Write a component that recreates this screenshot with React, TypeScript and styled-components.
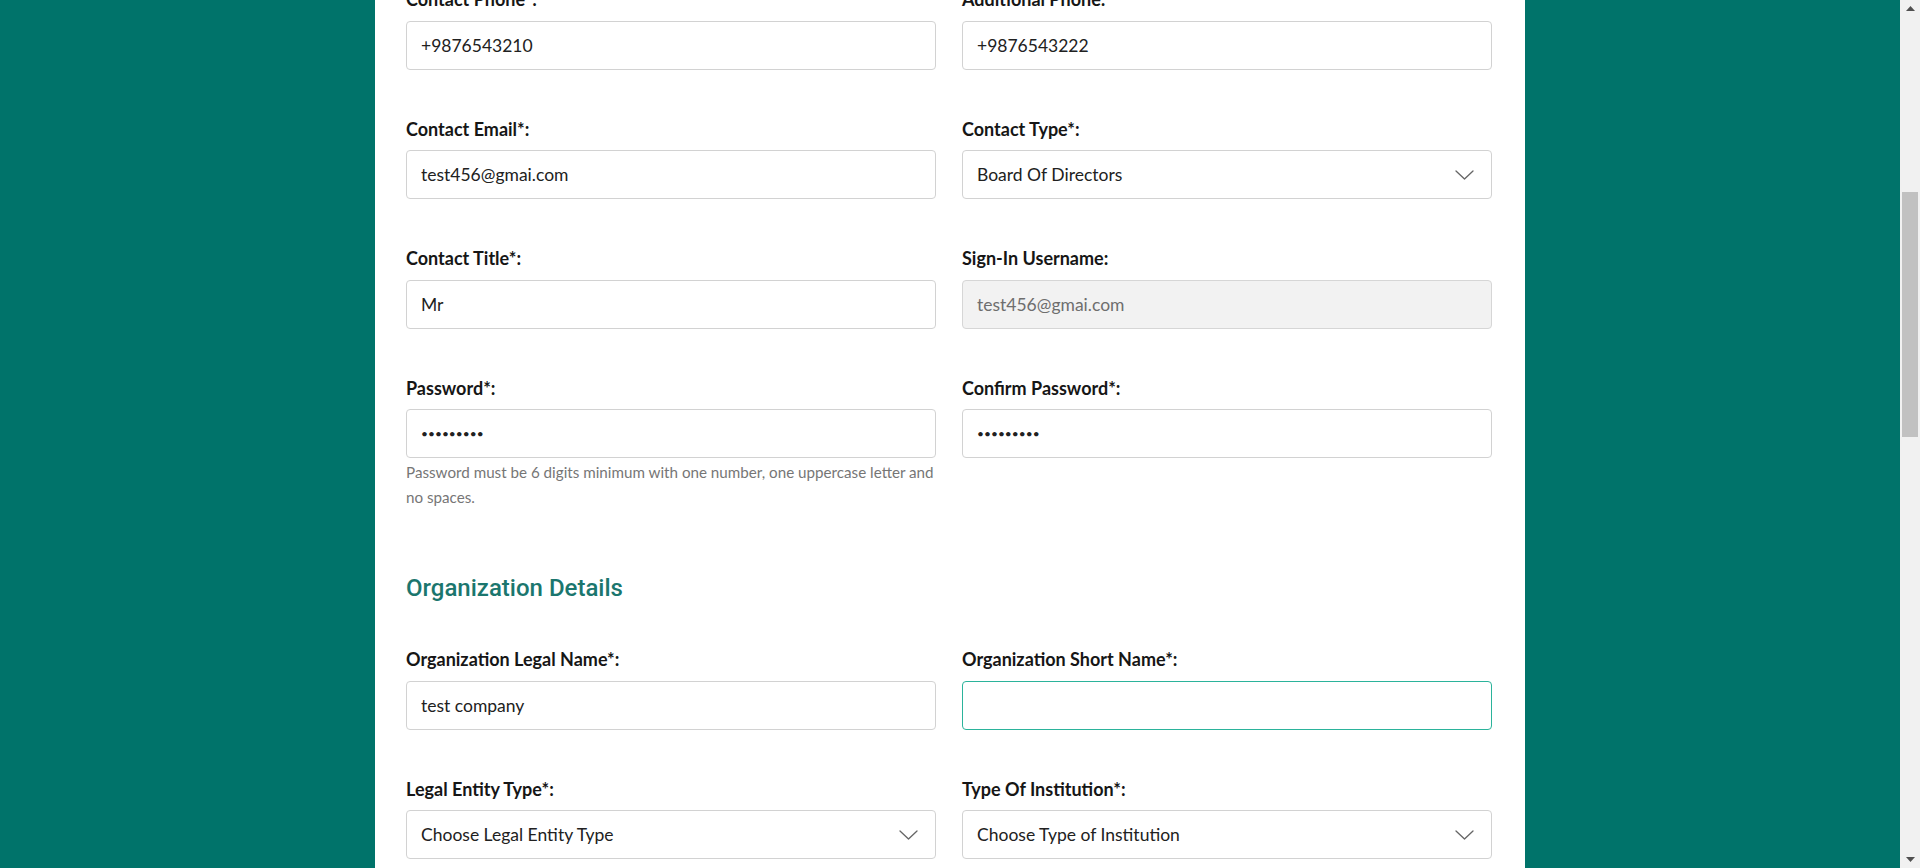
import React, { useLayoutEffect, useRef } from "react";
import styled, { createGlobalStyle } from "styled-components";

const TEAL = "#00736a";

const GlobalStyle = createGlobalStyle`
  html, body {
    margin: 0;
    padding: 0;
    height: 100%;
    overflow: hidden;
    background: ${TEAL};
  }
  body {
    font-family: Lato, "Open Sans", "Liberation Sans", sans-serif;
    color: #1d1d1d;
  }
  #root { height: 100%; }
  * { box-sizing: border-box; }
`;

const Screen = styled.div`
  display: flex;
  width: 100vw;
  height: 100vh;
`;

const Viewport = styled.div`
  flex: 1;
  min-width: 0;
  overflow: hidden;
  background: ${TEAL};
`;

const Card = styled.main`
  width: 1150px;
  margin: 0 auto;
  background: #ffffff;
  padding: 40px 33px 120px 31px;
`;

const PageTitle = styled.h1`
  margin: 0 0 30px;
  font-family: Roboto, "Noto Sans", sans-serif;
  font-weight: 500;
  font-size: 32px;
  line-height: 40px;
  color: ${TEAL};
`;

const SectionTitle = styled.h2`
  margin: 15.5px 0 44.5px;
  font-family: Roboto, "Noto Sans", sans-serif;
  font-weight: 500;
  font-size: 24px;
  line-height: 30px;
  color: #1b766e;
`;

const FormGrid = styled.div`
  display: grid;
  grid-template-columns: 1fr 1fr;
  column-gap: 26px;
  align-items: start;
`;

const FieldGroup = styled.div`
  display: flex;
  flex-direction: column;
  margin-bottom: 47px;
`;

const Label = styled.label`
  display: block;
  font-size: 18px;
  font-weight: 700;
  line-height: 24px;
  margin-bottom: 9.5px;
  color: #161616;
`;

const TextInput = styled.input<{ $focused?: boolean }>`
  width: 100%;
  height: 49px;
  padding: 0 14px;
  border: 1px solid ${(p) => (p.$focused ? "#2bb39b" : "#d2d2d2")};
  border-radius: 4px;
  background: #ffffff;
  font-family: Lato, "Open Sans", sans-serif;
  font-size: 17.5px;
  color: #212121;
  outline: none;

  &[type="password"] {
    font-size: 12px;
  }

  &:disabled {
    background: #f2f2f2;
    color: #6e6e6e;
    border-color: #d6d6d6;
  }
`;

const SelectWrap = styled.div`
  position: relative;
  width: 100%;
`;

const SelectBox = styled.select`
  width: 100%;
  height: 49px;
  padding: 0 48px 0 14px;
  border: 1px solid #d2d2d2;
  border-radius: 4px;
  background: #ffffff;
  font-family: Lato, "Open Sans", sans-serif;
  font-size: 17.5px;
  color: #212121;
  appearance: none;
  -webkit-appearance: none;
  outline: none;
`;

const Chevron = styled.svg`
  position: absolute;
  right: 18px;
  top: 50%;
  width: 19px;
  height: 10px;
  margin-top: -5px;
  pointer-events: none;
`;

const Hint = styled.p`
  margin: 2px 0 0;
  font-size: 15.2px;
  line-height: 25px;
  color: #767676;
`;

const SubmitButton = styled.button`
  height: 50px;
  padding: 0 40px;
  border: none;
  border-radius: 4px;
  background: ${TEAL};
  color: #ffffff;
  font-family: Lato, sans-serif;
  font-size: 18px;
  font-weight: 700;
`;

const ScrollTrack = styled.div`
  width: 20px;
  height: 100%;
  background: #f1f1f1;
  display: flex;
  flex-direction: column;
  align-items: center;
`;

const ArrowButton = styled.div`
  width: 100%;
  height: 17px;
  display: flex;
  align-items: center;
  justify-content: center;
  flex-shrink: 0;
`;

const Thumb = styled.div`
  width: 16px;
  background: #c1c1c1;
`;

const TrackFill = styled.div`
  flex: 1;
`;

const ChevronIcon = () => (
  <Chevron viewBox="0 0 19 10">
    <polyline
      points="1,1 9.5,9 18,1"
      fill="none"
      stroke="#666666"
      strokeWidth="1.3"
      strokeLinecap="round"
      strokeLinejoin="round"
    />
  </Chevron>
);

type FieldProps = {
  label: string;
  value?: string;
  type?: string;
  disabled?: boolean;
  focused?: boolean;
  hint?: string;
  inputRef?: React.Ref<HTMLInputElement>;
};

const Field = ({ label, value = "", type = "text", disabled, focused, hint, inputRef }: FieldProps) => (
  <FieldGroup>
    <Label>{label}</Label>
    <TextInput
      ref={inputRef}
      type={type}
      defaultValue={value}
      disabled={disabled}
      $focused={focused}
    />
    {hint && <Hint>{hint}</Hint>}
  </FieldGroup>
);

const SelectField = ({ label, value }: { label: string; value: string }) => (
  <FieldGroup>
    <Label>{label}</Label>
    <SelectWrap>
      <SelectBox defaultValue={value}>
        <option value={value}>{value}</option>
      </SelectBox>
      <ChevronIcon />
    </SelectWrap>
  </FieldGroup>
);

const THUMB_TOP = 192;
const THUMB_HEIGHT = 245;

export default function App() {
  const viewportRef = useRef<HTMLDivElement>(null);
  const anchorRef = useRef<HTMLInputElement>(null);

  useLayoutEffect(() => {
    const v = viewportRef.current;
    const a = anchorRef.current;
    if (!v || !a) return;
    const delta = a.getBoundingClientRect().top - v.getBoundingClientRect().top;
    v.scrollTop += delta - 21;
  }, []);

  return (
    <>
      <GlobalStyle />
      <Screen>
        <Viewport ref={viewportRef}>
          <Card>
            <PageTitle>Member Registration</PageTitle>
            <SectionTitle>Contact Details</SectionTitle>
            <FormGrid>
              <Field label="Contact First Name*:" value="John" />
              <Field label="Contact Last Name*:" value="Smith" />
              <Field label="Contact Phone*:" value="+9876543210" inputRef={anchorRef} />
              <Field label="Additional Phone:" value="+9876543222" />
              <Field label="Contact Email*:" value="test456@gmai.com" />
              <SelectField label="Contact Type*:" value="Board Of Directors" />
              <Field label="Contact Title*:" value="Mr" />
              <Field label="Sign-In Username:" value="test456@gmai.com" disabled />
              <Field
                label="Password*:"
                type="password"
                value="Test12345"
                hint="Password must be 6 digits minimum with one number, one uppercase letter and no spaces."
              />
              <Field label="Confirm Password*:" type="password" value="Test12345" />
            </FormGrid>

            <SectionTitle>Organization Details</SectionTitle>
            <FormGrid>
              <Field label="Organization Legal Name*:" value="test company" />
              <Field label="Organization Short Name*:" focused />
              <SelectField label="Legal Entity Type*:" value="Choose Legal Entity Type" />
              <SelectField label="Type Of Institution*:" value="Choose Type of Institution" />
              <Field label="Registration Number*:" />
              <Field label="Tax ID:" />
              <Field label="Website:" />
              <SelectField label="Country*:" value="Choose Country" />
              <Field label="Address*:" />
              <Field label="City*:" />
            </FormGrid>
            <SubmitButton type="button">Submit</SubmitButton>
          </Card>
        </Viewport>
        <ScrollTrack>
          <ArrowButton>
            <svg width="9" height="5" viewBox="0 0 9 5">
              <polygon points="0,5 4.5,0 9,5" fill="#505050" />
            </svg>
          </ArrowButton>
          <Thumb style={{ marginTop: THUMB_TOP - 17, height: THUMB_HEIGHT }} />
          <TrackFill />
          <ArrowButton>
            <svg width="9" height="5" viewBox="0 0 9 5">
              <polygon points="0,0 9,0 4.5,5" fill="#505050" />
            </svg>
          </ArrowButton>
        </ScrollTrack>
      </Screen>
    </>
  );
}
